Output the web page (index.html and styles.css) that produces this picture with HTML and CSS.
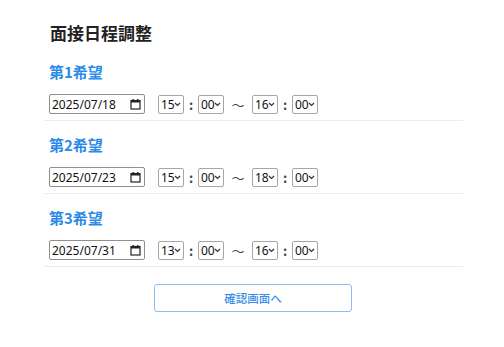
FILE: index.html
```html
<!DOCTYPE html>
<html lang="ja">
  <head>
    <meta charset="UTF-8" />
    <title>面接日程調整</title>
    <link rel="stylesheet" href="styles.css">
  </head>
  <body>
    <div class="wrap">
      <h2>面接日程調整</h2>

      <div class="kibou">
        <h3>第1希望</h3>
        <div class="row">
          <div class="date">
            <span>2025/07/18</span>
            <svg width="11" height="11" viewBox="0 0 11 11"><rect x="1" y="1.5" width="9" height="8.5" fill="none" stroke="#222" stroke-width="1.2"/><rect x="1" y="1.5" width="9" height="2" fill="#222"/><rect x="2.6" y="0" width="1.3" height="2" fill="#222"/><rect x="7.1" y="0" width="1.3" height="2" fill="#222"/></svg>
          </div>
          <div class="sel"><select><option>15</option></select><svg viewBox="0 0 7 5"><path d="M1 1l2.5 2.5L6 1" fill="none" stroke="#333" stroke-width="1.2"/></svg></div>
          <span class="colon">:</span>
          <div class="sel"><select><option>00</option></select><svg viewBox="0 0 7 5"><path d="M1 1l2.5 2.5L6 1" fill="none" stroke="#333" stroke-width="1.2"/></svg></div>
          <span class="kara">～</span>
          <div class="sel"><select><option>16</option></select><svg viewBox="0 0 7 5"><path d="M1 1l2.5 2.5L6 1" fill="none" stroke="#333" stroke-width="1.2"/></svg></div>
          <span class="colon">:</span>
          <div class="sel"><select><option>00</option></select><svg viewBox="0 0 7 5"><path d="M1 1l2.5 2.5L6 1" fill="none" stroke="#333" stroke-width="1.2"/></svg></div>
        </div>
      </div>

      <div class="kibou">
        <h3>第2希望</h3>
        <div class="row">
          <div class="date">
            <span>2025/07/23</span>
            <svg width="11" height="11" viewBox="0 0 11 11"><rect x="1" y="1.5" width="9" height="8.5" fill="none" stroke="#222" stroke-width="1.2"/><rect x="1" y="1.5" width="9" height="2" fill="#222"/><rect x="2.6" y="0" width="1.3" height="2" fill="#222"/><rect x="7.1" y="0" width="1.3" height="2" fill="#222"/></svg>
          </div>
          <div class="sel"><select><option>15</option></select><svg viewBox="0 0 7 5"><path d="M1 1l2.5 2.5L6 1" fill="none" stroke="#333" stroke-width="1.2"/></svg></div>
          <span class="colon">:</span>
          <div class="sel"><select><option>00</option></select><svg viewBox="0 0 7 5"><path d="M1 1l2.5 2.5L6 1" fill="none" stroke="#333" stroke-width="1.2"/></svg></div>
          <span class="kara">～</span>
          <div class="sel"><select><option>18</option></select><svg viewBox="0 0 7 5"><path d="M1 1l2.5 2.5L6 1" fill="none" stroke="#333" stroke-width="1.2"/></svg></div>
          <span class="colon">:</span>
          <div class="sel"><select><option>00</option></select><svg viewBox="0 0 7 5"><path d="M1 1l2.5 2.5L6 1" fill="none" stroke="#333" stroke-width="1.2"/></svg></div>
        </div>
      </div>

      <div class="kibou">
        <h3>第3希望</h3>
        <div class="row">
          <div class="date">
            <span>2025/07/31</span>
            <svg width="11" height="11" viewBox="0 0 11 11"><rect x="1" y="1.5" width="9" height="8.5" fill="none" stroke="#222" stroke-width="1.2"/><rect x="1" y="1.5" width="9" height="2" fill="#222"/><rect x="2.6" y="0" width="1.3" height="2" fill="#222"/><rect x="7.1" y="0" width="1.3" height="2" fill="#222"/></svg>
          </div>
          <div class="sel"><select><option>13</option></select><svg viewBox="0 0 7 5"><path d="M1 1l2.5 2.5L6 1" fill="none" stroke="#333" stroke-width="1.2"/></svg></div>
          <span class="colon">:</span>
          <div class="sel"><select><option>00</option></select><svg viewBox="0 0 7 5"><path d="M1 1l2.5 2.5L6 1" fill="none" stroke="#333" stroke-width="1.2"/></svg></div>
          <span class="kara">～</span>
          <div class="sel"><select><option>16</option></select><svg viewBox="0 0 7 5"><path d="M1 1l2.5 2.5L6 1" fill="none" stroke="#333" stroke-width="1.2"/></svg></div>
          <span class="colon">:</span>
          <div class="sel"><select><option>00</option></select><svg viewBox="0 0 7 5"><path d="M1 1l2.5 2.5L6 1" fill="none" stroke="#333" stroke-width="1.2"/></svg></div>
        </div>
      </div>

      <div class="kakunin">
        <button type="button">確認画面へ</button>
      </div>
    </div>
  </body>
</html>
```

FILE: styles.css
```css
body {
  margin: 0;
  background: #fff;
  font-family: "Noto Sans CJK JP", "Noto Sans", sans-serif;
  color: #222;
}
.wrap {
  width: 419px;
  margin-left: 44px;
  padding-top: 21px;
}
h2 {
  margin: 0 0 0 6px;
  font-size: 17px;
  line-height: 24px;
  font-weight: bold;
  color: #222;
}
.kibou {
  padding: 17px 0 6px 5px;
  border-bottom: 1px solid #ebebeb;
}
.kibou + .kibou {
  padding-top: 14px;
}
h3 {
  margin: 0 0 12px 0;
  font-size: 15px;
  line-height: 20px;
  font-weight: bold;
  color: #2b8ae8;
}
.row {
  display: flex;
  align-items: center;
  height: 20px;
}
.date {
  box-sizing: border-box;
  display: flex;
  align-items: center;
  justify-content: space-between;
  width: 96px;
  height: 20px;
  margin-right: 13px;
  padding: 0 3px 0 2px;
  border: 1px solid #8f8f8f;
  border-radius: 2px;
  font-family: "Noto Sans", sans-serif;
  font-size: 12px;
  color: #111;
}
.date svg {
  display: block;
}
.sel {
  position: relative;
  width: 26px;
  height: 19px;
}
.sel select {
  appearance: none;
  display: block;
  box-sizing: border-box;
  width: 26px;
  height: 19px;
  margin: 0;
  padding: 0 0 0 2px;
  border: 1px solid #a6a6a6;
  border-radius: 2px;
  font-family: "Noto Sans", sans-serif;
  font-size: 12px;
  color: #111;
  background: #fff;
}
.sel svg {
  position: absolute;
  right: 3px;
  top: 7px;
  width: 7px;
  height: 5px;
  pointer-events: none;
}
.colon {
  width: 14px;
  text-align: center;
  font-size: 13px;
  font-weight: bold;
  color: #444;
}
.kara {
  width: 28px;
  text-align: center;
  font-size: 13px;
  color: #444;
}
.kakunin {
  padding-top: 17px;
  padding-left: 110px;
}
button {
  width: 198px;
  height: 28px;
  background: #fff;
  border: 1px solid #8dbdf2;
  border-radius: 3px;
  color: #3b8ee8;
  font-family: "Noto Sans CJK JP", sans-serif;
  font-size: 11.5px;
  font-weight: 500;
  cursor: pointer;
}
```
